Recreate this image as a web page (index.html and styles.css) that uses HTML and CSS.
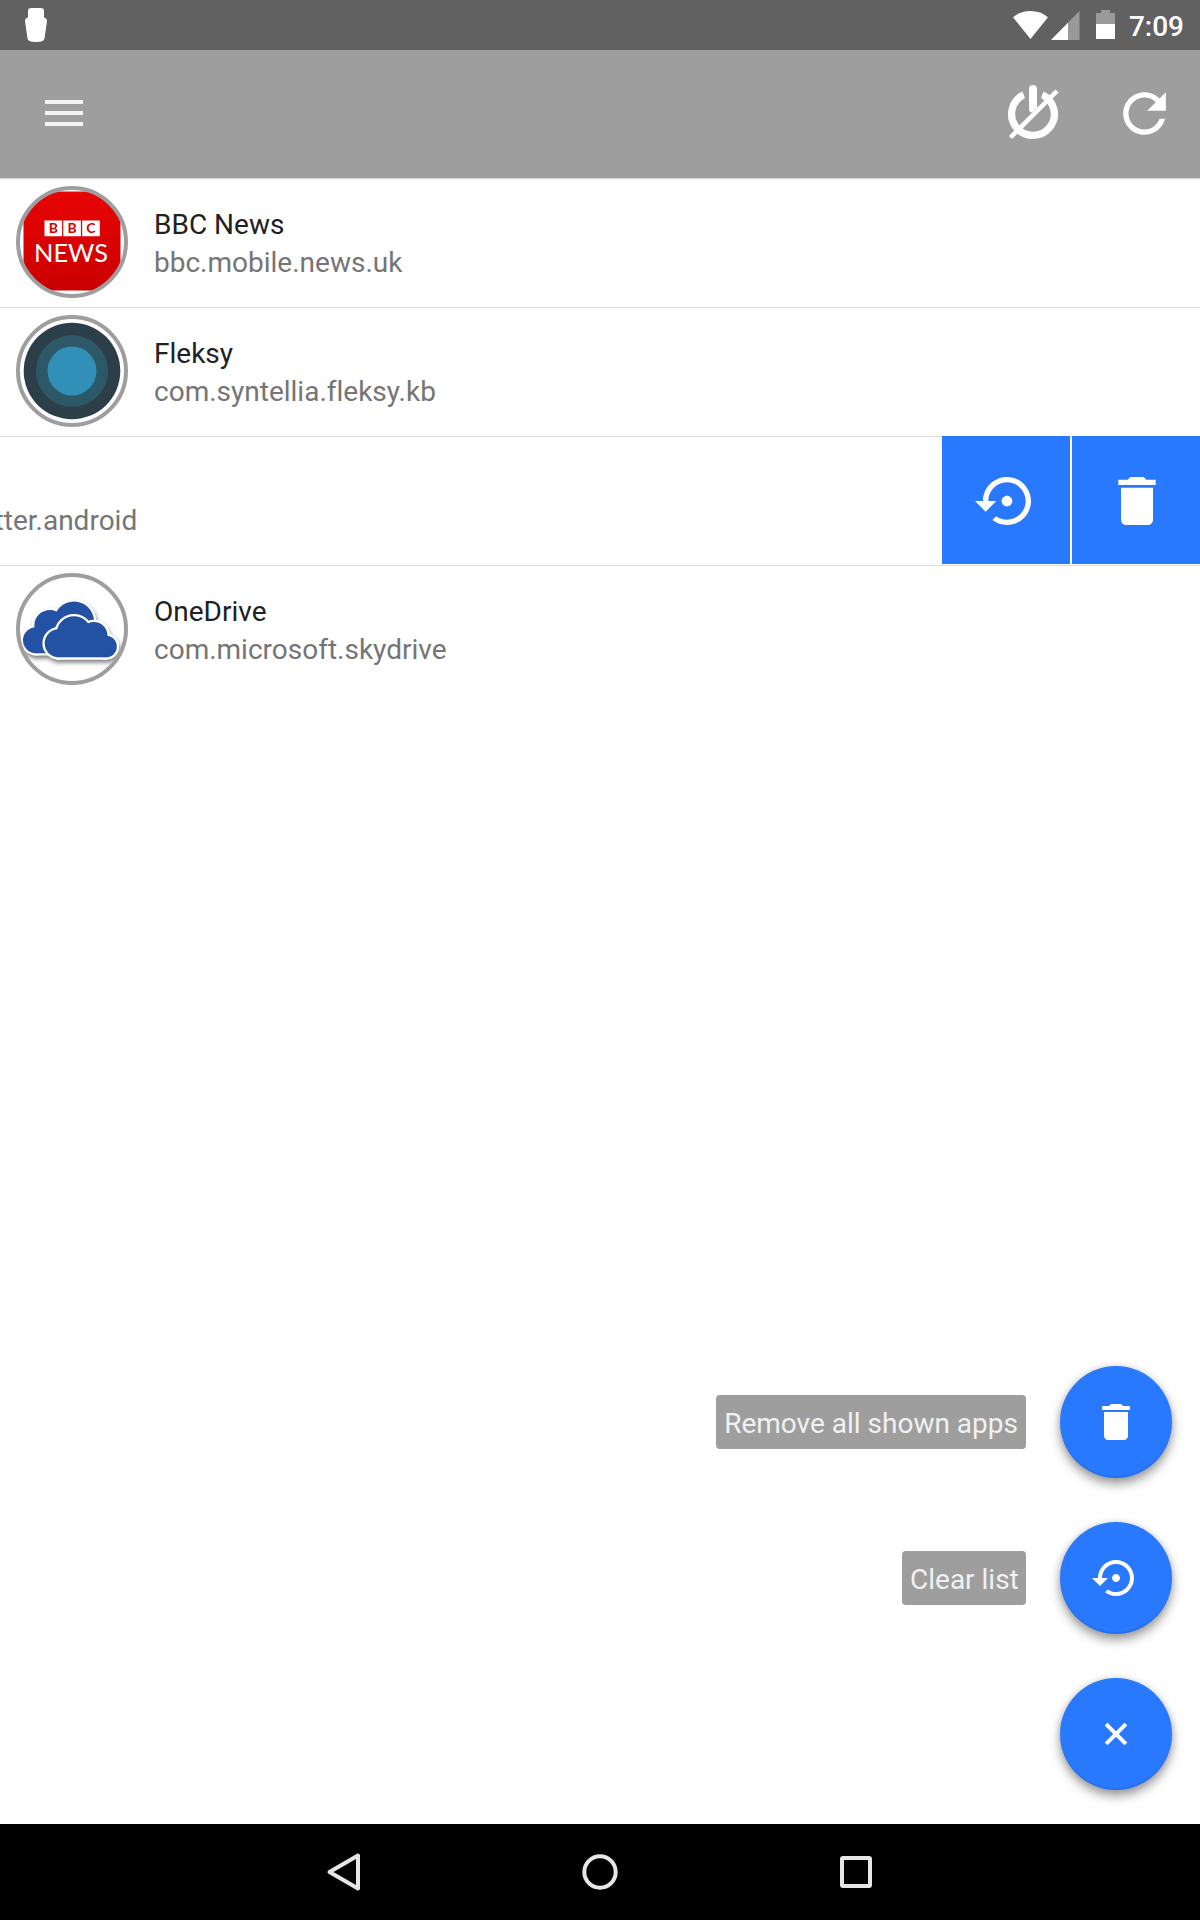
FILE: index.html
```html
<!DOCTYPE html>
<html lang="en">
<head>
<meta charset="utf-8">
<title>Apps</title>
<link rel="stylesheet" href="styles.css">
</head>
<body>
<svg class="defs" aria-hidden="true">
  <symbol id="restore" viewBox="0 0 24 24"><path d="M14 12c0-1.1-.9-2-2-2s-2 .9-2 2 .9 2 2 2 2-.9 2-2zm-2-9c-4.97 0-9 4.03-9 9H0l4 4 4-4H5c0-3.87 3.13-7 7-7s7 3.13 7 7-3.13 7-7 7c-1.51 0-2.91-.49-4.06-1.3l-1.42 1.44C8.04 20.3 9.94 21 12 21c4.97 0 9-4.03 9-9s-4.03-9-9-9z"/></symbol>
  <symbol id="trash" viewBox="0 0 24 24"><path d="M6 19c0 1.1.9 2 2 2h8c1.1 0 2-.9 2-2V7H6v12zM19 4h-3.5l-1-1h-5l-1 1H5v2h14V4z"/></symbol>
</svg>
<div class="screen">
  <header class="status">
    <svg class="notice" width="22" height="34" viewBox="0 0 22 34"><path d="M6 0h10q3 0 3 3v6.500q3 .5 3 3.500l-2.500 17.500q-.5 3.500-8.500 3.500t-8.500-3.500L0 13q0-3 3-3.500V3q0-3 3-3z"/></svg>
    <div class="status-right">
      <svg class="wifi" width="35" height="28" viewBox="0 0 35 28"><path d="M17.500 28 0 6.300Q7.600 0 17.500 0T35 6.300z"/></svg>
      <svg class="signal" width="29" height="29" viewBox="0 0 29 29"><path class="dim" d="M0 29 28.500 0v29z"/><path d="M0 29 17 11.700V29z"/></svg>
      <svg class="battery" width="19" height="29" viewBox="0 0 19 29"><path class="dim" d="M0 3h5V0h9v3h5v12H0z"/><path d="M0 14h19v15H0z"/></svg>
      <span class="clock">7:09</span>
    </div>
  </header>
  <div class="toolbar">
    <svg class="menu" width="38" height="26" viewBox="0 0 38 26"><path d="M0 0h38v4H0zM0 11h38v4H0zM0 22h38v4H0z"/></svg>
    <div class="tools">
      <svg width="64" height="64" viewBox="0 0 64 64">
        <path class="ring" d="M22.800 12.700A21.400 21.400 0 1 0 41.200 12.700"/>
        <path class="knock" d="M23.700 6.500h16.600v19h-16.600z"/>
        <path d="M28 7a4 4 0 0 1 8 0V25.500l-5 5Q28 30.300 28 27z"/>
        <path class="slash" d="M9.500 55.500 56 9"/>
      </svg>
      <svg width="64" height="64" viewBox="-.19 .19 24 24"><path d="M17.650 6.350C16.200 4.900 14.210 4 12 4c-4.420 0-7.990 3.580-7.990 8s3.570 8 7.990 8c3.730 0 6.840-2.550 7.730-6h-2.080c-.82 2.330-3.040 4-5.650 4-3.310 0-6-2.690-6-6s2.690-6 6-6c1.660 0 3.140.69 4.220 1.780L13 11h7V4l-2.350 2.350z"/></svg>
    </div>
  </div>
  <main class="content">
    <div class="row">
      <svg class="avatar" width="112" height="112" viewBox="0 0 112 112">
        <defs>
          <linearGradient id="red" x1="0" y1="0" x2="0" y2="1"><stop offset="0" stop-color="#e80505"/><stop offset="1" stop-color="#ca0000"/></linearGradient>
          <clipPath id="disc"><circle cx="56" cy="56" r="53"/></clipPath>
        </defs>
        <rect x="7.500" y="5.500" width="97" height="99" rx="4" fill="url(#red)" clip-path="url(#disc)"/>
        <path fill="#fff" d="M28.500 34.500h17.600v15.700H28.500zM47.300 34.500h17.600v15.700H47.300zM66.200 34.500h17.600v15.700H66.200z"/>
        <g class="bbc"><text x="37.300" y="47.300">B</text><text x="56.100" y="47.300">B</text><text x="75" y="47.300">C</text></g>
        <text class="news" x="18" y="76.200" textLength="74" lengthAdjust="spacingAndGlyphs">NEWS</text>
        <circle class="rim" cx="56" cy="56" r="54"/>
      </svg>
      <div class="app"><div class="name">BBC News</div><div class="package">bbc.mobile.news.uk</div></div>
    </div>
    <div class="row">
      <svg class="avatar" width="112" height="112" viewBox="0 0 112 112">
        <circle cx="56" cy="56" r="48.300" fill="#2c3e47"/><circle cx="56" cy="56" r="36" fill="#2d5867"/><circle cx="56" cy="56" r="24.500" fill="#318fb8"/>
        <circle class="rim" cx="56" cy="56" r="54"/>
      </svg>
      <div class="app"><div class="name">Fleksy</div><div class="package">com.syntellia.fleksy.kb</div></div>
    </div>
    <div class="row swiped">
      <div class="app"><div class="name">&nbsp;</div><div class="package">com.twitter.android</div></div>
      <div class="actions">
        <div class="action"><svg width="64" height="64"><use href="#restore"/></svg></div>
        <div class="action"><svg width="64" height="64"><use href="#trash"/></svg></div>
      </div>
    </div>
    <div class="row">
      <svg class="avatar" width="112" height="112" viewBox="0 0 112 112">
        <defs>
          <g id="back"><circle cx="20" cy="67.300" r="13"/><circle cx="34" cy="52.700" r="15.700"/><circle cx="58" cy="48.500" r="20"/><path d="M20 55h45v25.300H20z"/></g>
          <g id="front"><circle cx="42.700" cy="70.300" r="14"/><circle cx="58" cy="60.500" r="17.300"/><circle cx="78" cy="62.500" r="13.500"/><circle cx="90" cy="73.500" r="10.800"/><path d="M42.700 63h46v21.300h-46z"/></g>
        </defs>
        <g clip-path="url(#disc)">
          <g class="cloud-shadow"><use class="halo" href="#back"/><use class="halo" href="#front"/></g>
          <use class="cloud" href="#back"/><use class="halo" href="#front"/><use class="cloud" href="#front"/>
        </g>
        <circle class="rim" cx="56" cy="56" r="54"/>
      </svg>
      <div class="app"><div class="name">OneDrive</div><div class="package">com.microsoft.skydrive</div></div>
    </div>
    <div class="fabs">
      <div class="fab-row"><span class="label">Remove all shown apps</span><div class="fab"><svg width="48" height="48"><use href="#trash"/></svg></div></div>
      <div class="fab-row"><span class="label short">Clear list</span><div class="fab"><svg width="48" height="48"><use href="#restore"/></svg></div></div>
      <div class="fab-row"><div class="fab"><svg width="48" height="48" viewBox="0 0 48 48"><path class="cross" d="M14.100 14.100l19.800 19.800M33.900 14.100 14.100 33.900"/></svg></div></div>
    </div>
  </main>
  <nav class="navbar">
    <svg width="40" height="44" viewBox="0 0 40 44"><path d="M34 5.500v33L5.500 22z"/></svg>
    <svg width="40" height="44" viewBox="0 0 40 44"><circle cx="20" cy="22" r="15.700"/></svg>
    <svg width="40" height="44" viewBox="0 0 40 44"><rect x="6" y="8" width="28" height="28" rx="1"/></svg>
  </nav>
</div>
</body>
</html>
```
FILE: styles.css
```css
* { box-sizing: border-box; }
body { margin: 0; font-family: Roboto, "Noto Sans", sans-serif; font-size: 28px; font-variant-ligatures: none; }
svg { display: block; flex: none; fill: #fff; }
.defs { display: none; }
.screen { width: 1200px; height: 1920px; display: flex; flex-direction: column; background: #fff; overflow: hidden; }

.status { height: 50px; flex: none; background: #616161; display: flex; justify-content: space-between; align-items: flex-start; padding: 8px 16px 0 25px; }
.status-right { display: flex; align-items: flex-start; }
.wifi { margin: 3px 3px 0 0; }
.signal { margin: 3px 16px 0 0; }
.battery { margin: 2px 14px 0 0; }
.dim { fill: #9a9a9a; }
.clock { color: #fff; font-weight: 500; line-height: 38px; }

.toolbar { height: 128px; flex: none; background: #9e9e9e; display: flex; justify-content: space-between; align-items: center; padding: 0 24px 0 45px; }
.menu { fill: #f3f3f3; margin-top: -2px; }
.tools { display: flex; gap: 47px; }
.ring { fill: none; stroke: #fff; stroke-width: 7.200; }
.knock { fill: #9e9e9e; }
.slash { stroke: #fff; stroke-width: 4.500; }

.content { flex: 1; display: flex; flex-direction: column; border-top: 1px solid #dadada; }
.row { height: 129px; flex: none; display: flex; border-bottom: 1px solid #dedede; padding: 7px 0 0 16px; }
.row:first-child { box-shadow: inset 0 1px #f0f0f0; }
.row:nth-child(4) { border-bottom: 0; }
.avatar { margin-right: 26px; }
.rim { fill: none; stroke: #9e9e9e; stroke-width: 4; }
.app { padding-top: 20px; line-height: 38px; white-space: nowrap; }
.name { color: #212121; }
.package { color: #757575; }
.bbc { fill: #d80000; font: bold 14px Lato, sans-serif; text-anchor: middle; }
.news { fill: #fff; font: 25.500px Lato, sans-serif; }
.cloud { fill: #2351a4; }
.halo { fill: #fff; stroke: #fff; stroke-width: 4.600; }
.cloud-shadow { filter: drop-shadow(1px 3px 2px rgba(0, 0, 0, .5)); }

.swiped { padding: 0; justify-content: space-between; }
.swiped .app { margin-left: -105px; padding-top: 27px; }
.actions { display: flex; gap: 2px; height: 128px; margin-top: -1px; }
.action { width: 128px; background: #2979ff; display: flex; align-items: center; justify-content: center; }
.action svg { margin: 1px 0 0 1px; }

.fabs { margin-top: auto; padding: 0 28px 34px 0; display: flex; flex-direction: column; gap: 44px; }
.fab-row { display: flex; justify-content: flex-end; align-items: center; gap: 34px; }
.label { height: 54px; padding: 0 8px; border-radius: 4px; background: #9e9e9e; color: #f1f1f1; line-height: 58px; }
.short { width: 124px; white-space: nowrap; }
.fab { width: 112px; height: 112px; border-radius: 50%; background: #2979ff; display: flex; align-items: center; justify-content: center; box-shadow: 0 6px 11px rgba(0, 0, 0, .38), 0 0 6px rgba(0, 0, 0, .12), inset 0 -2px 1px rgba(0, 0, 0, .08); }
.cross { stroke: #fff; stroke-width: 4; }

.navbar { height: 96px; flex: none; background: #000; display: flex; justify-content: center; align-items: center; gap: 216px; }
.navbar svg { fill: none; stroke: #e6e6e6; stroke-width: 4; stroke-linejoin: round; }
```
